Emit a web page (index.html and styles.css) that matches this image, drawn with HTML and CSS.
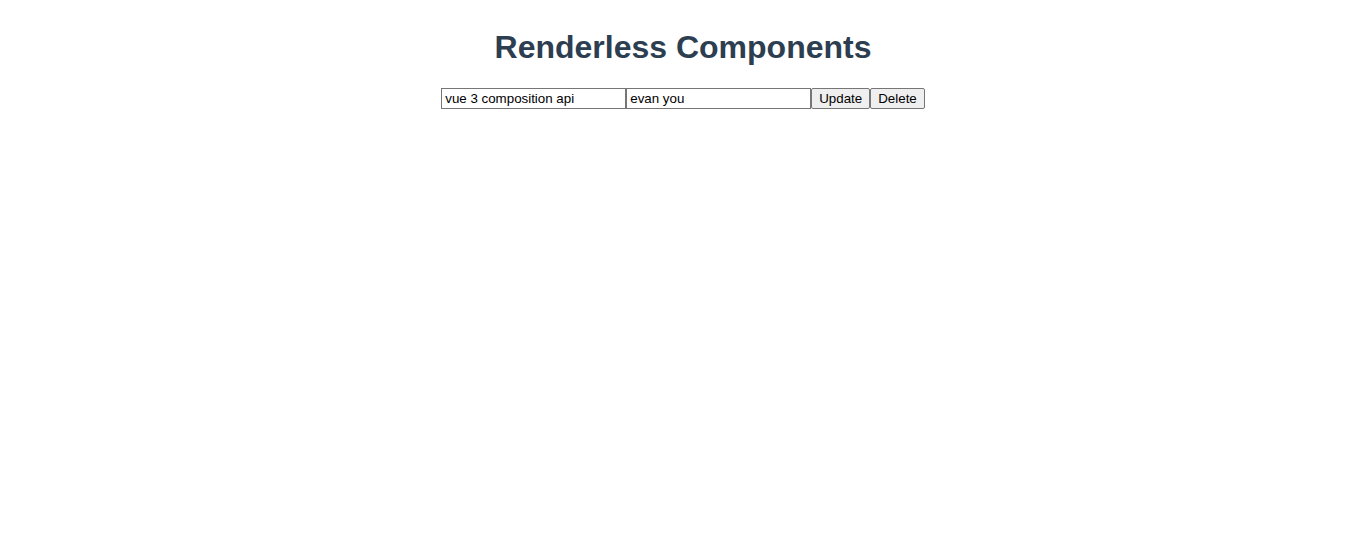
FILE: index.html
```html
<!DOCTYPE html>
<html>
<head>
<meta charset="utf-8">
<link rel="stylesheet" href="styles.css">
</head>
<body>
<div class="app">
<h1 class="title">Renderless Components</h1>
<div class="row"><input class="field" type="text" value="vue 3 composition api"><input class="field" type="text" value="evan you"><button class="btn">Update</button><button class="btn">Delete</button></div>
</div>
</body>
</html>
```
FILE: styles.css
```css
body {
  margin: 8px;
  font-family: "Liberation Sans", Arial, sans-serif;
}
.app {
  text-align: center;
  color: #2c3e50;
}
.title {
  font-size: 32px;
  font-weight: bold;
  margin: 21.44px 0;
}
.row {
  font-size: 0;
}
.field {
  font-family: "Liberation Sans", Arial, sans-serif;
  font-size: 13.333px;
  width: 185px;
  height: 21px;
  box-sizing: border-box;
  padding: 1px 3px;
  border: 1px solid #767676;
  border-radius: 0;
  color: #000;
  margin: 0;
  vertical-align: top;
}
.btn {
  font-family: "Liberation Sans", Arial, sans-serif;
  font-size: 13.333px;
  height: 21px;
  box-sizing: border-box;
  padding: 1px 7px;
  margin: 0;
  border: 1px solid #767676;
  border-radius: 2px;
  background: #efefef;
  color: #000;
  vertical-align: top;
}
```
